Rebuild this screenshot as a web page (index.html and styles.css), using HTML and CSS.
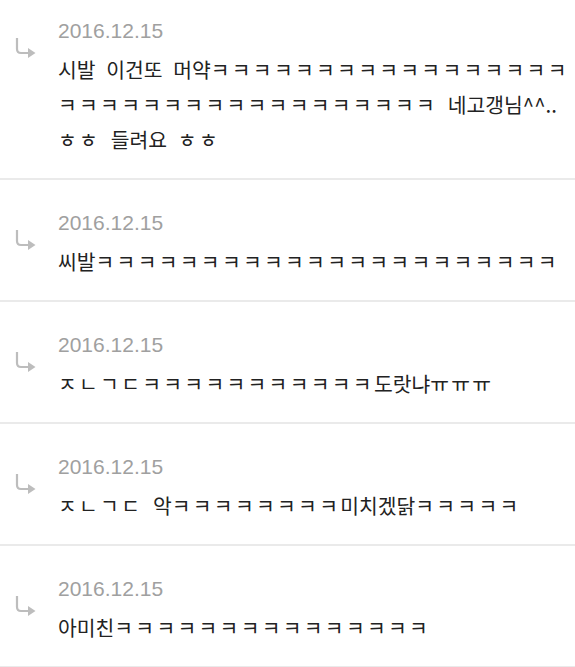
FILE: index.html
```html
<!DOCTYPE html>
<html lang="ko">
<head>
  <meta charset="UTF-8">
  <meta name="viewport" content="width=device-width, initial-scale=1.0">
  <title>댓글</title>
  <link rel="stylesheet" href="styles.css">
</head>
<body>

  <ul class="replies">
    <li class="reply">
      <div class="reply-icon">
        <svg width="22" height="20" viewBox="0 0 22 20"><path d="M2 0 V11 Q2 15 6 15 H14" fill="none" stroke="#bdbdbd" stroke-width="2.2"/><polygon points="13,10 20.5,15 13,20" fill="#bdbdbd"/></svg>
      </div>
      <div class="reply-body">
        <div class="reply-date">2016.12.15</div>
        <p class="reply-text">시발 이건또 머약<span class="jamo">ㅋㅋㅋㅋㅋㅋㅋㅋㅋㅋㅋㅋㅋㅋㅋㅋㅋ</span><br><span class="jamo">ㅋㅋㅋㅋㅋㅋㅋㅋㅋㅋㅋㅋㅋㅋㅋㅋㅋㅋ</span> 네고갱님^^..<br><span class="jamo">ㅎㅎ</span> 들려요 <span class="jamo">ㅎㅎ</span></p>
      </div>
    </li>

    <li class="reply">
      <div class="reply-icon">
        <svg width="22" height="20" viewBox="0 0 22 20"><path d="M2 0 V11 Q2 15 6 15 H14" fill="none" stroke="#bdbdbd" stroke-width="2.2"/><polygon points="13,10 20.5,15 13,20" fill="#bdbdbd"/></svg>
      </div>
      <div class="reply-body">
        <div class="reply-date">2016.12.15</div>
        <p class="reply-text">씨발<span class="jamo">ㅋㅋㅋㅋㅋㅋㅋㅋㅋㅋㅋㅋㅋㅋㅋㅋㅋㅋㅋㅋㅋㅋ</span></p>
      </div>
    </li>

    <li class="reply">
      <div class="reply-icon">
        <svg width="22" height="20" viewBox="0 0 22 20"><path d="M2 0 V11 Q2 15 6 15 H14" fill="none" stroke="#bdbdbd" stroke-width="2.2"/><polygon points="13,10 20.5,15 13,20" fill="#bdbdbd"/></svg>
      </div>
      <div class="reply-body">
        <div class="reply-date">2016.12.15</div>
        <p class="reply-text"><span class="jamo">ㅈㄴㄱㄷㅋㅋㅋㅋㅋㅋㅋㅋㅋㅋㅋ</span>도랏냐<span class="jamo">ㅠㅠㅠ</span></p>
      </div>
    </li>

    <li class="reply">
      <div class="reply-icon">
        <svg width="22" height="20" viewBox="0 0 22 20"><path d="M2 0 V11 Q2 15 6 15 H14" fill="none" stroke="#bdbdbd" stroke-width="2.2"/><polygon points="13,10 20.5,15 13,20" fill="#bdbdbd"/></svg>
      </div>
      <div class="reply-body">
        <div class="reply-date">2016.12.15</div>
        <p class="reply-text"><span class="jamo">ㅈㄴㄱㄷ</span> 악<span class="jamo">ㅋㅋㅋㅋㅋㅋㅋㅋ</span>미치겠닭<span class="jamo">ㅋㅋㅋㅋㅋ</span></p>
      </div>
    </li>

    <li class="reply">
      <div class="reply-icon">
        <svg width="22" height="20" viewBox="0 0 22 20"><path d="M2 0 V11 Q2 15 6 15 H14" fill="none" stroke="#bdbdbd" stroke-width="2.2"/><polygon points="13,10 20.5,15 13,20" fill="#bdbdbd"/></svg>
      </div>
      <div class="reply-body">
        <div class="reply-date">2016.12.15</div>
        <p class="reply-text">아미친<span class="jamo">ㅋㅋㅋㅋㅋㅋㅋㅋㅋㅋㅋㅋㅋㅋㅋ</span></p>
      </div>
    </li>
  </ul>

</body>
</html>
```

FILE: styles.css
```css
* {
  margin: 0;
  padding: 0;
  box-sizing: border-box;
}

body {
  background: #fff;
  color: #222;
  font-family: "Noto Sans CJK KR", "Noto Sans", sans-serif;
  overflow: hidden;
}

.replies {
  list-style: none;
}

.reply {
  display: flex;
  padding: 28px 0 21px;
  border-bottom: 2px solid #eaeaea;
}

/* 첫 줄은 위가 잘려 있음 */
.reply:first-child {
  padding-top: 16px;
}

.reply-icon {
  width: 58px;
  flex-shrink: 0;
  padding: 22px 0 0 15px;
}

.reply-icon svg {
  display: block;
}

.reply-date {
  font-family: "Liberation Sans", Arial, sans-serif;
  font-size: 21px;
  line-height: 30px;
  color: #a0a0a0;
  margin-bottom: 6px;
}

.reply-text {
  font-size: 20.4px;
  line-height: 35px;
  word-spacing: 5px;
  white-space: nowrap;
}

.reply-text .jamo {
  letter-spacing: 2.3px;
}
```
